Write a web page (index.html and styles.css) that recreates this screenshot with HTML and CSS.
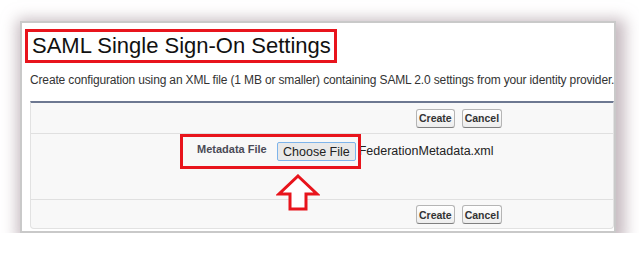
FILE: index.html
```html
<!DOCTYPE html>
<html lang="en">
<head>
  <meta charset="UTF-8" />
  <title>SAML Single Sign-On Settings</title>
  <link rel="stylesheet" href="styles.css">
</head>
<body>
  <div class="card">
    <h1 class="title">SAML Single Sign-On Settings</h1>
    <p class="desc">Create configuration using an XML file (1 MB or smaller) containing SAML 2.0 settings from your identity provider.</p>

    <div class="block">
      <div class="btn-row">
        <button class="btn">Create</button>
        <button class="btn">Cancel</button>
      </div>

      <div class="field-row">
        <span class="field-label">Metadata File</span>
        <button class="file-btn">Choose File</button>
        <span class="file-name">FederationMetadata.xml</span>
      </div>

      <div class="btn-row">
        <button class="btn">Create</button>
        <button class="btn">Cancel</button>
      </div>

      <!-- annotations -->
      <div class="mark"></div>
      <svg class="arrow" width="44" height="38" viewBox="0 0 44 38">
        <path d="M22 2 L41 20 L30 20 L30 35 L14 35 L14 20 L3 20 Z" fill="#fff" stroke="#e8141c" stroke-width="3" stroke-linejoin="miter"/>
      </svg>
    </div>
  </div>
</body>
</html>
```

FILE: styles.css
```css
* {
  box-sizing: border-box;
}

body {
  margin: 0;
  background: #fff;
  font-family: 'Liberation Sans', Arial, sans-serif;
}

.card {
  margin: 21px 0 0 20px;
  width: 596px;
  height: 212px;
  background: #fff;
  border: 2px solid #c9c9c9;
  box-shadow: 3px 4px 14px 6px rgba(160, 140, 150, 0.6);
  padding: 6px 0 0 3px;
  overflow: hidden;
}

.title {
  margin: 0;
  width: 312px;
  height: 34px;
  border: 3px solid #e8141c;
  padding-left: 4px;
  font-size: 22px;
  font-weight: normal;
  line-height: 28px;
  color: #111;
}

.desc {
  margin: 10px 0 0 5px;
  font-size: 12px;
  line-height: 15px;
  color: #333;
  letter-spacing: -0.15px;
  white-space: nowrap;
}

.block {
  position: relative;
  margin: 13px 0 0 5px;
  width: 584px;
  height: 128px;
  background: #f8f8f8;
  border: 1px solid #e2e2e2;
  border-top: 2px solid #6d7891;
  border-radius: 0 0 4px 4px;
}

.btn-row {
  display: flex;
  gap: 7px;
  padding-left: 385px;
  height: 30px;
  align-items: center;
}

.btn-row + .field-row {
  border-top: 1px solid #e0e0e0;
}

.field-row + .btn-row {
  border-top: 1px solid #e0e0e0;
}

.btn {
  height: 19px;
  padding: 0 2px;
  font-family: 'Liberation Sans', Arial, sans-serif;
  font-size: 10.5px;
  font-weight: bold;
  color: #333;
  background: linear-gradient(#ffffff, #ededed);
  border: 1px solid #b5b5b5;
  border-bottom-color: #7f7f7f;
  border-radius: 3px;
}

.field-row {
  display: flex;
  align-items: flex-start;
  height: 66px;
  padding: 8px 0 0 166px;
}

.field-label {
  font-size: 11px;
  font-weight: bold;
  color: #4a4a56;
  margin-top: 1px;
  width: 80px;
}

.file-btn {
  height: 19px;
  padding: 0 5px;
  font-family: 'Liberation Sans', Arial, sans-serif;
  font-size: 12.5px;
  color: #222;
  background: #e9e9e9;
  border: 1px solid #7eb4ea;
  border-radius: 2px;
}

.file-name {
  margin-left: 3px;
  font-size: 12.5px;
  color: #222;
  line-height: 19px;
}

.mark {
  position: absolute;
  left: 149px;
  top: 31px;
  width: 181px;
  height: 35px;
  border: 3px solid #e8141c;
}

.arrow {
  position: absolute;
  left: 245px;
  top: 71px;
}
```
